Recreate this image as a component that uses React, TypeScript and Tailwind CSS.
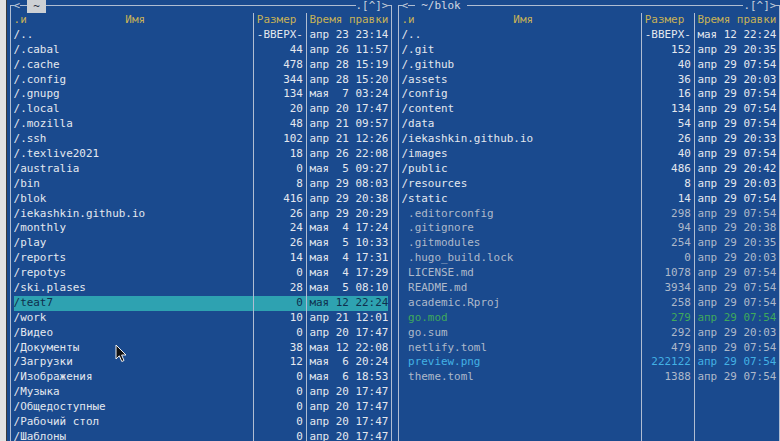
import React from 'react';

type Kind = 'dir' | 'file' | 'exec' | 'image';

interface Entry {
  name: string;
  size: string;
  date: string;
  kind: Kind;
  selected?: boolean;
}

const kindColor: Record<Kind, string> = {
  dir: 'text-[#e4e8ee]',
  file: 'text-[#aeb9ca]',
  exec: 'text-[#3fa95c]',
  image: 'text-[#43b1e4]',
};

const d = (name: string, size: string, date: string, selected = false): Entry => ({
  name: '/' + name,
  size,
  date,
  kind: 'dir',
  selected,
});
const f = (name: string, size: string, date: string, kind: Kind = 'file'): Entry => ({
  name: ' ' + name,
  size,
  date,
  kind,
});

const home: Entry[] = [
  d('..', '-ВВЕРХ-', 'апр 23 23:14'),
  d('.cabal', '44', 'апр 26 11:57'),
  d('.cache', '478', 'апр 28 15:19'),
  d('.config', '344', 'апр 28 15:20'),
  d('.gnupg', '134', 'мая  7 03:24'),
  d('.local', '20', 'апр 20 17:47'),
  d('.mozilla', '48', 'апр 21 09:57'),
  d('.ssh', '102', 'апр 21 12:26'),
  d('.texlive2021', '18', 'апр 26 22:08'),
  d('australia', '0', 'мая  5 09:27'),
  d('bin', '8', 'апр 29 08:03'),
  d('blok', '416', 'апр 29 20:38'),
  d('iekashkin.github.io', '26', 'апр 29 20:29'),
  d('monthly', '24', 'мая  4 17:24'),
  d('play', '26', 'мая  5 10:33'),
  d('reports', '14', 'мая  4 17:31'),
  d('repotys', '0', 'мая  4 17:29'),
  d('ski.plases', '28', 'мая  5 08:10'),
  d('teat7', '0', 'мая 12 22:24', true),
  d('work', '10', 'апр 21 12:01'),
  d('Видео', '0', 'апр 20 17:47'),
  d('Документы', '38', 'мая 12 22:08'),
  d('Загрузки', '12', 'мая  6 20:24'),
  d('Изображения', '0', 'мая  6 18:53'),
  d('Музыка', '0', 'апр 20 17:47'),
  d('Общедоступные', '0', 'апр 20 17:47'),
  d('Рабочий стол', '0', 'апр 20 17:47'),
  d('Шаблоны', '0', 'апр 20 17:47'),
];

const blok: Entry[] = [
  d('..', '-ВВЕРХ-', 'мая 12 22:24'),
  d('.git', '152', 'апр 29 20:35'),
  d('.github', '40', 'апр 29 07:54'),
  d('assets', '36', 'апр 29 20:03'),
  d('config', '16', 'апр 29 07:54'),
  d('content', '134', 'апр 29 07:54'),
  d('data', '54', 'апр 29 07:54'),
  d('iekashkin.github.io', '26', 'апр 29 20:33'),
  d('images', '40', 'апр 29 07:54'),
  d('public', '486', 'апр 29 20:42'),
  d('resources', '8', 'апр 29 20:03'),
  d('static', '14', 'апр 29 07:54'),
  f('.editorconfig', '298', 'апр 29 07:54'),
  f('.gitignore', '94', 'апр 29 20:38'),
  f('.gitmodules', '254', 'апр 29 20:35'),
  f('.hugo_build.lock', '0', 'апр 29 20:03'),
  f('LICENSE.md', '1078', 'апр 29 07:54'),
  f('README.md', '3934', 'апр 29 07:54'),
  f('academic.Rproj', '258', 'апр 29 07:54'),
  f('go.mod', '279', 'апр 29 07:54', 'exec'),
  f('go.sum', '292', 'апр 29 20:03'),
  f('netlify.toml', '479', 'апр 29 07:54'),
  f('preview.png', '222122', 'апр 29 07:54', 'image'),
  f('theme.toml', '1388', 'апр 29 07:54'),
];

const ROWS = 28;

const VLine = () => (
  <div className="flex w-[1ch] shrink-0 justify-center">
    <div className="w-px bg-[#b0bdd2]" />
  </div>
);

function Row({ entry }: { entry?: Entry }) {
  const color = entry ? (entry.selected ? 'text-[#0e2f4e]' : kindColor[entry.kind]) : '';
  return (
    <div className="flex h-[14.9px] leading-[14.9px]">
      <VLine />
      <div className={`flex ${entry?.selected ? 'bg-[#2ea2b1]' : ''} ${color}`}>
        <div className="w-[36ch] overflow-hidden whitespace-pre">{entry?.name}</div>
        <VLine />
        <div className="w-[7ch] whitespace-pre text-right">{entry?.size}</div>
        <VLine />
        <div className="w-[12ch] whitespace-pre">{entry?.date}</div>
      </div>
      <VLine />
    </div>
  );
}

function Panel({ active, path, entries }: { active: boolean; path: string; entries: Entry[] }) {
  const rows = Array.from({ length: ROWS }, (_, i) => entries[i]);
  return (
    <div className="w-[59ch] shrink-0 text-[#c9d1dd]">
      {/* top border with path */}
      <div className="flex h-[13px] leading-[12px]">
        <div className="w-[1ch] shrink-0 overflow-hidden">
          <div className="ml-[3px] mt-[5px] h-full border-l border-t border-[#b0bdd2]" />
        </div>
        <span>{'<'}</span>
        <div className="w-[1ch] shrink-0">
          <div className="mt-[5px] border-t border-[#b0bdd2]" />
        </div>
        {active ? (
          <span className="whitespace-pre bg-[#cdd0d4] leading-[13px] text-[#1e2b3b]">{` ${path} `}</span>
        ) : (
          <span className="whitespace-pre text-[#d2d8e2]">{` ${path} `}</span>
        )}
        <div className="flex-1">
          <div className="mt-[5px] border-t border-[#b0bdd2]" />
        </div>
        <span>.[^]&gt;</span>
        <div className="w-[1ch] shrink-0 overflow-hidden">
          <div className="mr-[3px] mt-[5px] h-full border-r border-t border-[#b0bdd2]" />
        </div>
      </div>

      {/* column headers */}
      <div className="flex h-[14.9px] leading-[14.9px] text-[#c8b257]">
        <VLine />
        <div className="w-[36ch] whitespace-pre">{'.и               Имя'}</div>
        <VLine />
        <div className="w-[7ch] whitespace-pre">Размер</div>
        <VLine />
        <div className="w-[12ch] whitespace-pre">Время правки</div>
        <VLine />
      </div>

      {rows.map((e, i) => (
        <Row key={i} entry={e} />
      ))}
    </div>
  );
}

export default function App() {
  return (
    <div className="relative flex h-[441px] w-[780px] overflow-hidden bg-[#1a4a8e] font-['DejaVu_Sans_Mono',monospace] text-[10.93px]">
      <div className="w-[7px] shrink-0 border-r border-[#3c3c3c] bg-[#e2e2e2]" />
      <div className="flex">
        <Panel active path="~" entries={home} />
        <Panel active={false} path="~/blok" entries={blok} />
      </div>

      {/* mouse pointer */}
      <svg className="absolute left-[115px] top-[344px]" width="12" height="19" viewBox="0 0 12 19">
        <path
          d="M1 1 L1 15 L4.3 11.8 L6.8 17.5 L9 16.5 L6.6 11 L11 11 Z"
          fill="#111"
          stroke="#f0f0f0"
          strokeWidth="1"
          strokeLinejoin="round"
        />
      </svg>
    </div>
  );
}
